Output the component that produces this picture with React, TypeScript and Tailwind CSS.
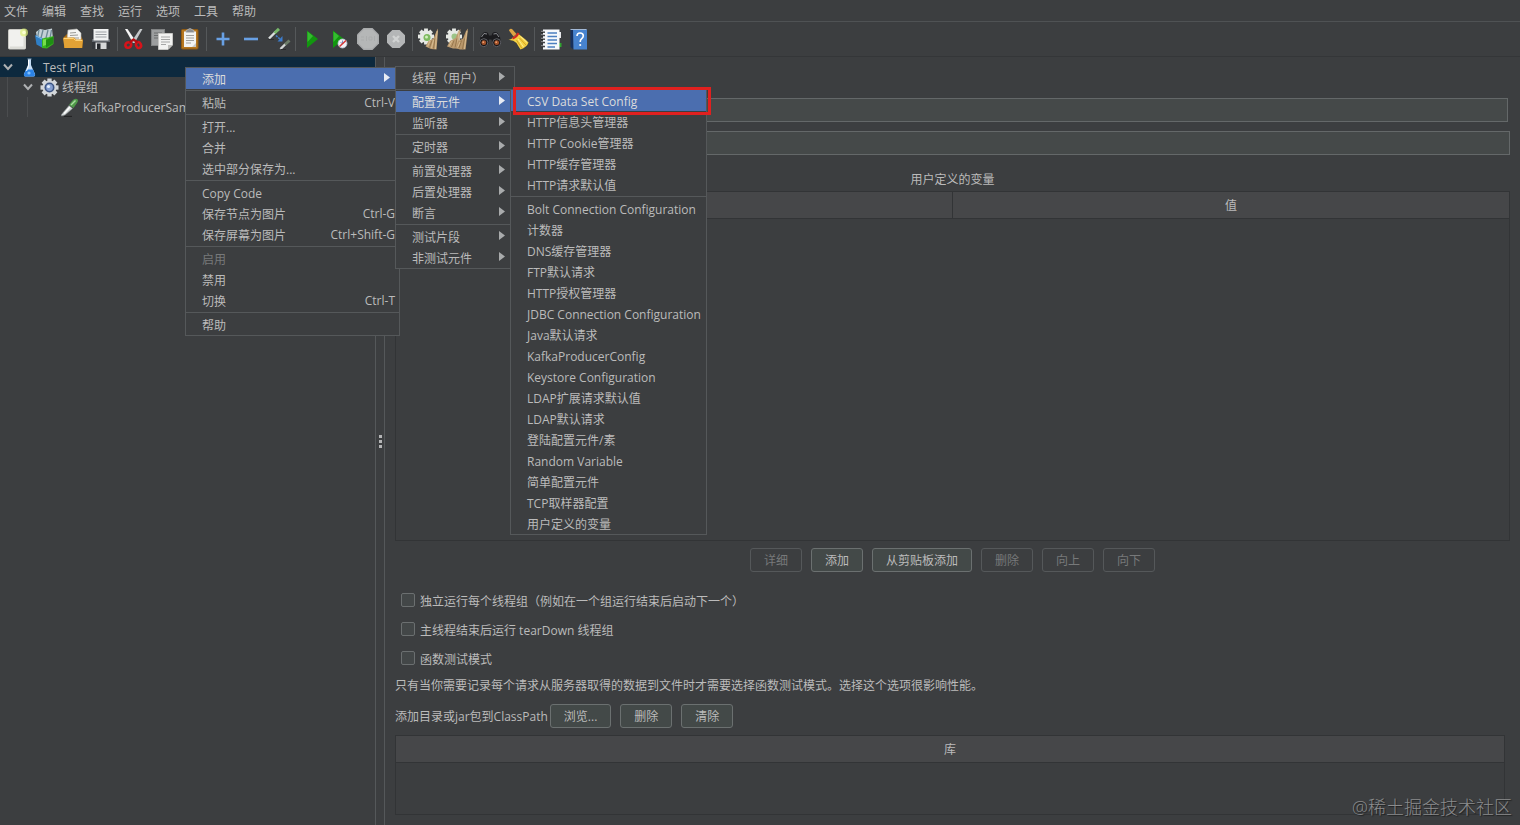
import { Fragment, type ReactNode } from "react";

type Item = {
  label: string;
  shortcut?: string;
  arrow?: boolean;
  active?: boolean;
  disabled?: boolean;
};

const menus = ["文件", "编辑", "查找", "运行", "选项", "工具", "帮助"];

// every inner array is a group, groups are split by a separator line
const contextMenu: Item[][] = [
  [{ label: "添加", arrow: true, active: true }],
  [{ label: "粘贴", shortcut: "Ctrl-V" }],
  [{ label: "打开..." }, { label: "合并" }, { label: "选中部分保存为..." }],
  [
    { label: "Copy Code" },
    { label: "保存节点为图片", shortcut: "Ctrl-G" },
    { label: "保存屏幕为图片", shortcut: "Ctrl+Shift-G" },
  ],
  [
    { label: "启用", disabled: true },
    { label: "禁用" },
    { label: "切换", shortcut: "Ctrl-T" },
  ],
  [{ label: "帮助" }],
];

const addMenu: Item[][] = [
  [{ label: "线程（用户）", arrow: true }],
  [
    { label: "配置元件", arrow: true, active: true },
    { label: "监听器", arrow: true },
  ],
  [{ label: "定时器", arrow: true }],
  [
    { label: "前置处理器", arrow: true },
    { label: "后置处理器", arrow: true },
    { label: "断言", arrow: true },
  ],
  [
    { label: "测试片段", arrow: true },
    { label: "非测试元件", arrow: true },
  ],
];

const configMenu: Item[][] = [
  [
    { label: "CSV Data Set Config", active: true },
    { label: "HTTP信息头管理器" },
    { label: "HTTP Cookie管理器" },
    { label: "HTTP缓存管理器" },
    { label: "HTTP请求默认值" },
  ],
  [
    { label: "Bolt Connection Configuration" },
    { label: "计数器" },
    { label: "DNS缓存管理器" },
    { label: "FTP默认请求" },
    { label: "HTTP授权管理器" },
    { label: "JDBC Connection Configuration" },
    { label: "Java默认请求" },
    { label: "KafkaProducerConfig" },
    { label: "Keystore Configuration" },
    { label: "LDAP扩展请求默认值" },
    { label: "LDAP默认请求" },
    { label: "登陆配置元件/素" },
    { label: "Random Variable" },
    { label: "简单配置元件" },
    { label: "TCP取样器配置" },
    { label: "用户定义的变量" },
  ],
];

const Gear = ({ cx, cy, r, fill }: { cx: number; cy: number; r: number; fill: string }) => (
  <g fill={fill}>
    <circle cx={cx} cy={cy} r={r * 0.78} />
    {[0, 45, 90, 135].map((a) => (
      <rect
        key={a}
        x={cx - r * 0.24}
        y={cy - r}
        width={r * 0.48}
        height={r * 2}
        transform={`rotate(${a} ${cx} ${cy})`}
      />
    ))}
  </g>
);

const Brush = () => (
  <>
    <path d="M21.500 6L23 3.500L22.500 13L21.500 24.500L16 24L10.500 21.500L13.500 16L18.500 13.500Z" fill="#bd9c70" />
    <path d="M20 13.500L18.500 23.500M17 15.500L14.500 22.500" stroke="#8d6d44" strokeWidth=".8" fill="none" />
    <path d="M22.300 6L21 15L20.500 24M18.500 15L16.500 23M15 16L12.500 21.500" stroke="#dec59b" strokeWidth=".8" fill="none" />
  </>
);

const Pipette = () => (
  <>
    <path d="M2.500 17.500L10 8.500L13.500 11.500L6 18L2.500 19Z" fill="#d3d8d8" stroke="#8a8f90" strokeWidth=".6" />
    <path d="M5 16.500L11 10" stroke="#fff" strokeWidth="1.300" />
    <path d="M10 8L13 4Q15.500 1 18 2Q20 3.500 18 6L14.500 11Z" fill="#4f9849" />
    <path d="M12 8L16.500 3.500" stroke="#a9dba0" strokeWidth="1.500" />
    <path d="M5 19.500H13" stroke="#232425" strokeWidth="1.300" />
  </>
);

const toolbar: { name: string; icon: ReactNode }[][] = [
  [
    {
      name: "新建",
      icon: (
        <>
          <rect x="5.500" y="4.500" width="17" height="19.500" rx="1" fill="#f1f1ee" stroke="#c9c9c4" />
          <path d="M7 22.500H21.500V12" stroke="#dcdcd6" strokeWidth="2" fill="none" />
          <circle cx="21" cy="7.500" r="4" fill="#dff27a" opacity=".7" />
          <circle cx="21" cy="7.500" r="1.800" fill="#fbffd2" />
        </>
      ),
    },
    {
      name: "模板",
      icon: (
        <>
          <path d="M5 7L9 4L14 5L21 3.500L22 14L14 17L6 14Z" fill="#c3d0d6" />
          <path d="M8 5L6.500 13M12 5L10 13M17 5L15 13M20.500 5L19 13" stroke="#6d8794" strokeWidth="1.300" />
          <path d="M4 10L12 13.500V23L5.500 19.500Z" fill="#2f7fc6" />
          <path d="M5 11L11 14" stroke="#85c0ee" />
          <path d="M11 14Q13 12 17 12.500L22.500 11V19L16 23.500L11 23Z" fill="#39b51f" />
          <path d="M15 15L22 12V18.500L15 22.500Z" fill="#1e8f13" />
          <path d="M12 14.500L15 14V20L12 21Z" fill="#76df4c" />
        </>
      ),
    },
    {
      name: "打开",
      icon: (
        <>
          <path d="M5 12L8 9H21L23.500 14V23H5Z" fill="#a86a12" />
          <path d="M9 5L18 4L22 8V15H8Z" fill="#f4f4f2" stroke="#b9b9b4" strokeWidth=".6" />
          <path d="M11 8L17 7.500M11 10.500L19 10M10.500 13H20" stroke="#9a9a96" />
          <path d="M4 13.500Q4 12.500 5 12.500H15L17 14.500H23Q24 14.500 24 15.500L23 23H5.500Z" fill="#e3a235" />
          <path d="M5 13.500H14.500L16.500 15.500H23" stroke="#ffd377" fill="none" />
        </>
      ),
    },
    {
      name: "保存",
      icon: (
        <>
          <path d="M5 5H22L23 7V24H5Z" fill="#34373c" />
          <path d="M5 14H23V17H5Z" fill="#62676e" />
          <rect x="6.500" y="4" width="15" height="11.500" fill="#f0f1f2" />
          <path d="M8.500 7H19.500M8.500 9.500H19.500M8.500 12H19.500" stroke="#9da1a6" />
          <rect x="8.500" y="17.500" width="11" height="6.500" fill="#d5d7d9" />
          <rect x="10" y="18.500" width="3.500" height="5.500" fill="#22252a" />
        </>
      ),
    },
  ],
  [
    {
      name: "剪切",
      icon: (
        <>
          <path d="M5 4L7.500 4L16 16.500L13 18Z" fill="#f0f0f0" />
          <path d="M22.500 4L20 4L11.500 16.500L14.500 18Z" fill="#c4c7c9" />
          <path d="M6 4L15 17" stroke="#fff" strokeWidth=".7" />
          <ellipse cx="8.300" cy="20" rx="3" ry="2.600" fill="none" stroke="#d6131a" strokeWidth="2.600" transform="rotate(-30 8.300 20)" />
          <ellipse cx="18.500" cy="20" rx="2.400" ry="3" fill="none" stroke="#d6131a" strokeWidth="2.600" transform="rotate(-25 18.500 20)" />
          <path d="M9.500 17.500L13.500 14.500L17.500 17.500" stroke="#b30d12" strokeWidth="2.300" fill="none" />
        </>
      ),
    },
    {
      name: "复制",
      icon: (
        <>
          <rect x="3.500" y="4.500" width="13" height="16" fill="#9c9e9f" stroke="#818384" />
          <path d="M6 8H14M6 10.500H14M6 13H12" stroke="#6c6e6f" />
          <path d="M10.500 8.500H24.500V20L20 24.500H10.500Z" fill="#f2f2f1" stroke="#c6c6c4" />
          <path d="M24.500 20H20V24.500Z" fill="#bcbcba" />
          <path d="M13 12H22M13 14.500H22M13 17H22M13 19.500H18" stroke="#a5a6a6" />
        </>
      ),
    },
    {
      name: "粘贴",
      icon: (
        <>
          <rect x="5.500" y="4.500" width="16.500" height="19.500" rx="1" fill="#b7771f" stroke="#8f5a12" />
          <path d="M8 6.500H20V22H8Z" fill="#f3f3f1" />
          <path d="M20 18L16 22H20Z" fill="#c9c9c5" />
          <path d="M10 10.500H18M10 13H18M10 15.500H18M10 18H15" stroke="#a0a09d" />
          <path d="M10 7.500V5.500L12 4.500Q14 2.500 16 4.500L18 5.500V7.500Z" fill="#8b8e91" stroke="#c7cacc" strokeWidth=".6" />
        </>
      ),
    },
  ],
  [
    {
      name: "展开",
      icon: <path d="M14 7.500V20.500M7.500 14H20.500" stroke="#68a0e4" strokeWidth="2.600" />,
    },
    {
      name: "折叠",
      icon: <path d="M7 14H21" stroke="#68a0e4" strokeWidth="2.600" />,
    },
    {
      name: "切换",
      icon: (
        <>
          <path d="M4 13.500L11 6.500" stroke="#dadedd" strokeWidth="2.400" />
          <path d="M9.500 8L14 3.800" stroke="#78b86a" strokeWidth="3" />
          <path d="M3.500 14.500H9" stroke="#2a2b2c" />
          <path d="M15.500 24L21 18.500" stroke="#d2d6d5" strokeWidth="2.400" />
          <path d="M20 19.500L24.500 15.500" stroke="#6c7c68" strokeWidth="3" />
          <path d="M16 24.500H21" stroke="#2a2b2c" />
          <path d="M11 10.500L15.500 14.500" stroke="#3c7ccc" strokeWidth="1.600" strokeDasharray="2 1" />
          <path d="M17.500 11V16.500H12.500Z" fill="#3c7ccc" />
        </>
      ),
    },
  ],
  [
    {
      name: "启动",
      icon: (
        <>
          <path d="M9 5.500L20 14L9 23Z" fill="#12960f" />
          <path d="M9.500 6.500L15 11L9.500 17Z" fill="#35bb30" />
        </>
      ),
    },
    {
      name: "不停顿开始",
      icon: (
        <>
          <path d="M7 5.500L18 14L7 23Z" fill="#12960f" />
          <path d="M7.500 6.500L13 11L7.500 17Z" fill="#35bb30" />
          <circle cx="16.500" cy="18.500" r="4.500" fill="#f0f1f6" stroke="#b8bfd0" strokeWidth=".8" />
          <path d="M14.500 17.500L16.500 18.500V15.500" stroke="#5a78b8" strokeWidth=".8" />
          <path d="M13.500 21.500L20 15.500" stroke="#d63838" strokeWidth="1.600" />
        </>
      ),
    },
    {
      name: "停止",
      icon: (
        <>
          <path d="M9.500 3H18.500L25 9.500V18.500L18.500 25H9.500L3 18.500V9.500Z" fill="#a9abac" />
          <path d="M10 4.500H18L23.500 10V18L18 23.500H10L4.500 18V10Z" fill="#b5b7b7" />
          <path d="M7 12H10M7 15H10M12.500 11V16M15 12H18V15H15ZM20.500 11V16" stroke="#abadad" />
        </>
      ),
    },
    {
      name: "关闭",
      icon: (
        <>
          <path d="M10.300 5H17.700L23 10.300V17.700L17.700 23H10.300L5 17.700V10.300Z" fill="#b4b6b7" />
          <path d="M11 11L17 17M17 11L11 17" stroke="#d0d2d2" strokeWidth="2.400" />
        </>
      ),
    },
  ],
  [
    {
      name: "清除",
      icon: (
        <>
          <Gear cx={11} cy={11.5} r={8} fill="#e6e9e4" />
          <circle cx="12" cy="12.500" r="3.500" fill="#7dba5e" />
          <circle cx="11.500" cy="12" r="1.500" fill="#d2f0bd" />
          <Brush />
        </>
      ),
    },
    {
      name: "清除全部",
      icon: (
        <>
          <Gear cx={11} cy={11.5} r={8} fill="#e6e9e4" />
          <circle cx="11.500" cy="11.500" r="3" fill="#9cc487" />
          <path d="M15.500 6L17.500 4L16.500 14L15.500 23.500L10 23.500L4 21.500L7 16L12.500 13Z" fill="#bd9c70" />
          <path d="M14 13.500L12 22.500M11 15.500L8.500 22" stroke="#8d6d44" strokeWidth=".8" />
          <path d="M16 6L15 15L14 23M9 16L6 21" stroke="#dec59b" strokeWidth=".8" fill="none" />
          <path d="M23 6L25 3.500L24 13L22.500 24.500L17 24.500L12.500 23L15 16L20 13.500Z" fill="#b8966a" />
          <path d="M21.500 13.500L19.500 24M18.500 15.500L16 23" stroke="#8d6d44" strokeWidth=".8" />
          <path d="M24 6L22.500 15L21.500 24M17 17L14.500 22.500" stroke="#dec59b" strokeWidth=".8" fill="none" />
        </>
      ),
    },
  ],
  [
    {
      name: "查找",
      icon: (
        <>
          <path d="M4.500 12L7 8Q9.500 6 12 8L13 10.500H15.500L16.500 8Q19 6 21.500 8L24 12L25 17.500Q25 21.500 20.500 22Q16 21.500 16 17L15.500 14.500H13L12.500 17Q12.500 21.500 8 22Q3.500 21.500 3.500 17.500Z" fill="#1b1b1e" />
          <path d="M5.500 12L8 8.500L11 9M17.500 9L20.500 8.500L23 12" stroke="#8b8d92" fill="none" />
          <circle cx="7.800" cy="17.700" r="4" fill="#141416" stroke="#626369" />
          <circle cx="20.700" cy="17.700" r="4" fill="#141416" stroke="#626369" />
          <circle cx="7.800" cy="17.700" r="2.400" fill="#a4532b" />
          <circle cx="20.700" cy="17.700" r="2.400" fill="#a4532b" />
          <circle cx="7.300" cy="17.200" r=".9" fill="#f0a070" />
          <circle cx="20.200" cy="17.200" r=".9" fill="#f0a070" />
        </>
      ),
    },
    {
      name: "重置搜索",
      icon: (
        <>
          <path d="M5 5.500Q5.500 3 8 4L12.500 9L9.500 11.500Z" fill="#dca445" />
          <path d="M4.500 15Q8 14 9 12.500L14 8.500Q17 11 21.500 14.500L24.500 17.500Q23 22 16.500 24.500Q14.500 21.500 12.500 18Q9 14.500 4.500 15Z" fill="#f3d043" />
          <path d="M12.500 15L18 23.500M15.500 13L22 20" stroke="#cb981b" strokeWidth=".8" fill="none" />
          <path d="M14 14L19.500 22M16.500 11.500L23 17.500" stroke="#fff09a" strokeWidth=".9" fill="none" />
          <path d="M8.500 13.500Q12.500 12 14.500 8" stroke="#cf2a22" strokeWidth="2.200" fill="none" />
        </>
      ),
    },
  ],
  [
    {
      name: "函数助手对话框",
      icon: (
        <>
          <path d="M22 7H24V13H22Z" fill="#e8e9eb" />
          <path d="M22 18H24.500V22H22Z" fill="#2fa52f" />
          <rect x="6" y="4.500" width="16.500" height="20" fill="#f6f8fb" />
          <path d="M10.500 8H20M10.500 11.500H20M10.500 15H20M10.500 18.500H20M10.500 22H18" stroke="#4c7fc0" strokeWidth="1.500" />
          <path d="M4 7H8M4 10.500H8M4 14H8M4 17.500H8M4 21.500H8" stroke="#1e1f21" strokeWidth="1.500" />
          <path d="M4 6.300H8M4 9.800H8M4 13.300H8M4 16.800H8M4 20.800H8" stroke="#c9cccf" strokeWidth=".7" />
        </>
      ),
    },
    {
      name: "帮助",
      icon: (
        <>
          <path d="M5.500 4.500H8.500V24.500L5.500 22Z" fill="#17305c" />
          <path d="M8 4.500H22V24.500H8.500Z" fill="#4783cf" />
          <path d="M5.500 4.500H21.500" stroke="#a3b9d6" />
          <path d="M12 11Q12 8 15 8Q18.300 8 18.300 10.800Q18.300 12.500 16.500 13.800Q15.200 14.800 15.200 17" stroke="#fff" strokeWidth="1.600" fill="none" />
          <circle cx="15.200" cy="20" r="1.100" fill="#fff" />
        </>
      ),
    },
  ],
];

const Menu = ({ groups, label, className }: { groups: Item[][]; label: string; className: string }) => (
  <div
    role="menu"
    aria-label={label}
    className={`absolute border border-[#55585a] bg-[#3c3e40] ${className}`}
  >
    {groups.map((group, i) => (
      <Fragment key={i}>
        {i > 0 && (
          <div role="separator" className="flex h-[3px] items-center">
            <div className="h-px w-full bg-[#55585a]" />
          </div>
        )}
        {group.map((item) => (
          <button
            key={item.label}
            role="menuitem"
            disabled={item.disabled}
            className={`flex h-[21px] w-full items-center justify-between pr-1 pl-4 whitespace-nowrap ${
              item.active ? "bg-[#4b6eaf] text-[#dcdcdc]" : item.disabled ? "text-[#77797a]" : ""
            }`}
          >
            <span className="pt-[2px]">{item.label}</span>
            {item.shortcut && <span>{item.shortcut}</span>}
            {item.arrow && (
              <svg width="6" height="9" viewBox="0 0 6 9" className="mr-[5px] mb-[2px]">
                <path d="M0 0L6 4.500L0 9Z" fill={item.active ? "#e8ecf4" : "#a9abac"} />
              </svg>
            )}
          </button>
        ))}
      </Fragment>
    ))}
  </div>
);

const Btn = ({ children, disabled }: { children: ReactNode; disabled?: boolean }) => (
  <button
    disabled={disabled}
    className={`h-6 rounded-[3px] border px-[13px] pt-[2px] ${
      disabled ? "border-[#55585a] text-[#77797a]" : "border-[#6b7070] bg-[#434948]"
    }`}
  >
    {children}
  </button>
);

const Chevron = () => (
  <svg width="10" height="8" viewBox="0 0 10 8" fill="none" stroke="#afb1b3" strokeWidth="2">
    <path d="M1 1.500L5 6L9 1.500" />
  </svg>
);

const Tree = () => (
  <div role="tree" className="w-[375px] shrink-0 overflow-hidden whitespace-nowrap">
    <div role="treeitem" aria-selected="true" className="flex h-5 items-center bg-[#0d293e] pl-[3px]">
      <Chevron />
      <svg width="20" height="20" viewBox="0 0 20 20" className="ml-[6px]">
        <path d="M9 2H12V8L16 17Q16.500 19.500 14.500 19.500H6.500Q4.500 19.500 5 17L9 8Z" fill="#c4dcf4" />
        <path d="M7 12.500H14L16 17.500Q16 19.500 14.500 19.500H6.500Q4.500 19.500 5 17.500Z" fill="#2b83e6" />
        <path d="M9.500 3V9L7.500 14" stroke="#fff" fill="none" />
        <path d="M8.500 2H12.500" stroke="#8ea4b8" />
        <circle cx="10" cy="16" r="1.600" fill="#7fc0ff" />
      </svg>
      <span className="ml-1 pt-[2px]">Test Plan</span>
    </div>
    <div className="ml-[7px] border-l border-[#4b4d4f]">
      <div role="treeitem" aria-selected="false" className="flex h-5 items-center pl-[15px]">
        <Chevron />
        <svg width="20" height="20" viewBox="0 0 20 20" className="ml-[6px]">
          <Gear cx={10.5} cy={10.5} r={9} fill="#d3d7da" />
          <circle cx="10.500" cy="10.500" r="5" fill="#3d5583" />
          <circle cx="10.500" cy="10.500" r="3.400" fill="#86a0d0" />
          <circle cx="9.500" cy="9.500" r="1.600" fill="#e4eefc" />
        </svg>
        <span className="ml-[3px] pt-[2px]">线程组</span>
      </div>
      <div className="ml-[19px] border-l border-[#4b4d4f]">
        <div role="treeitem" aria-selected="false" className="flex h-5 items-center pl-[31px]">
          <svg width="20" height="20" viewBox="0 0 20 20">
            <Pipette />
          </svg>
          <span className="ml-1 pt-[2px]">KafkaProducerSampler</span>
        </div>
      </div>
    </div>
  </div>
);

const checks = [
  "独立运行每个线程组（例如在一个组运行结束后启动下一个）",
  "主线程结束后运行 tearDown 线程组",
  "函数测试模式",
];

const fieldStyle = "h-6 border border-[#646869] bg-[#454949] px-2 outline-none";

const TestPlan = () => (
  <main className="flex min-w-0 flex-1 flex-col px-[10px] pt-[41px] pb-[10px]">
    <input aria-label="名称" className={`mr-[2px] ml-10 ${fieldStyle}`} />
    <input aria-label="注释" className={`mt-[9px] ml-10 ${fieldStyle}`} />

    <h2 className="mt-3 pt-px text-center leading-[23px]">用户定义的变量</h2>
    <div className="flex-1 border border-[#323436]">
      <table className="w-full table-fixed border-collapse">
        <thead>
          <tr className="h-[26px] border-b border-[#323436] bg-[#464749]">
            <th aria-label="名称" className="border-r border-[#323436]" />
            <th className="pt-[3px] pb-0 font-normal">值</th>
          </tr>
        </thead>
      </table>
    </div>
    <div className="mt-[7px] flex justify-center gap-[9px]">
      <Btn disabled>详细</Btn>
      <Btn>添加</Btn>
      <Btn>从剪贴板添加</Btn>
      <Btn disabled>删除</Btn>
      <Btn disabled>向上</Btn>
      <Btn disabled>向下</Btn>
    </div>

    <div className="mt-[14px] pl-[6px]">
      {checks.map((text) => (
        <label key={text} className="flex h-[29px] items-center gap-[5px] pb-px">
          <input
            type="checkbox"
            className="size-[14px] appearance-none rounded-[2px] border border-[#6b6f70] bg-[#434748]"
          />
          <span className="pt-[3px]">{text}</span>
        </label>
      ))}
    </div>
    <p className="pt-[2px] leading-[22px]">
      只有当你需要记录每个请求从服务器取得的数据到文件时才需要选择函数测试模式。选择这个选项很影响性能。
    </p>
    <div className="mt-[7px] flex items-center gap-[9px]">
      <span className="-mr-[7px] pt-[2px]">添加目录或jar包到ClassPath</span>
      <Btn>浏览...</Btn>
      <Btn>删除</Btn>
      <Btn>清除</Btn>
    </div>
    <div className="mt-[7px] mr-[5px] h-20 border border-[#323436]">
      <table className="w-full border-collapse">
        <thead>
          <tr className="h-[26px] border-b border-[#323436] bg-[#464749]">
            <th className="pt-[3px] pb-0 font-normal">库</th>
          </tr>
        </thead>
      </table>
    </div>
  </main>
);

export default function App() {
  return (
    <div className="relative flex min-h-screen flex-col overflow-hidden bg-[#3c3e40] font-['Open_Sans','Noto_Sans_CJK_SC',sans-serif] text-[12px] leading-4 text-[#bbbbbb]">
      <nav className="flex h-[22px] items-center gap-[14px] border-b border-[#4f5254] pt-[2px] pl-1">
        {menus.map((name) => (
          <button key={name}>{name}</button>
        ))}
      </nav>
      <div role="toolbar" className="flex h-[35px] items-center border-b border-[#343638] pl-[3px]">
        {toolbar.map((group, i) => (
          <Fragment key={i}>
            {i > 0 && <div className="mx-[2px] h-6 w-px bg-[#55585a]" />}
            {group.map((tool) => (
              <button key={tool.name} aria-label={tool.name} title={tool.name}>
                <svg width="28" height="28" viewBox="0 0 28 28" fill="none">
                  {tool.icon}
                </svg>
              </button>
            ))}
          </Fragment>
        ))}
      </div>

      <div className="flex flex-1">
        <Tree />
        <div className="flex w-[10px] shrink-0 flex-col items-center justify-center gap-[2px] border-x border-[#55585a]">
          <i className="size-[3px] bg-[#b4b5b6]" />
          <i className="size-[3px] bg-[#b4b5b6]" />
          <i className="size-[3px] bg-[#b4b5b6]" />
        </div>
        <TestPlan />
      </div>

      <Menu label="上下文菜单" groups={contextMenu} className="top-[67px] left-[185px] w-[215px]" />
      <Menu label="添加" groups={addMenu} className="top-[66px] left-[395px] w-[120px]" />
      <Menu label="配置元件" groups={configMenu} className="top-[89px] left-[510px] w-[197px]" />
      <div className="pointer-events-none absolute top-[87px] left-[513px] h-7 w-[198px] border-3 border-[#e0201f]" />

      <div className="absolute right-2 bottom-[6px] text-[18px] leading-6 font-light text-[#8b8c8d] [text-shadow:1px_1px_1px_#1e1f20]">
        @稀土掘金技术社区
      </div>
    </div>
  );
}
